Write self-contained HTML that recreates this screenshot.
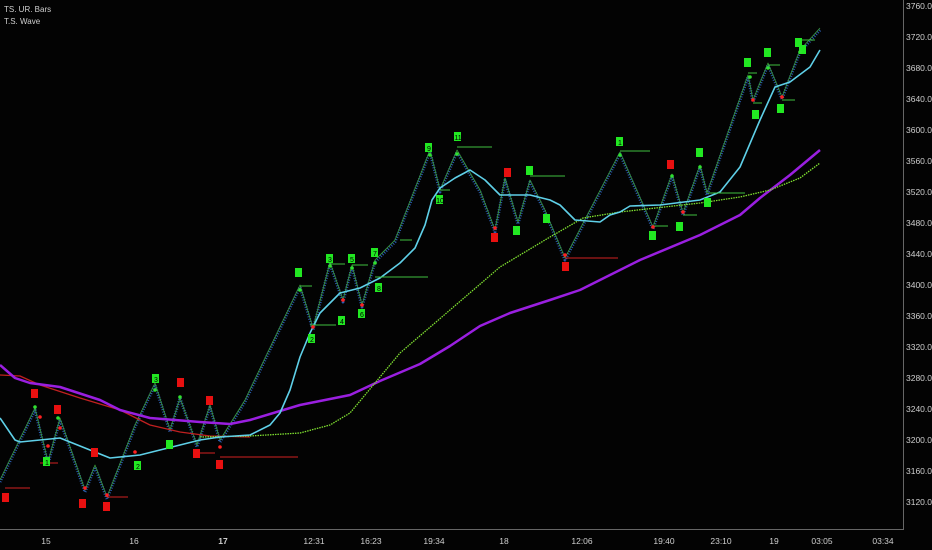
<!DOCTYPE html>
<html><head><meta charset="utf-8"><style>
html,body{margin:0;padding:0;background:#030303;overflow:hidden}
svg{display:block}
text{font-family:"Liberation Sans",sans-serif}
polyline{stroke-linejoin:round}
</style></head><body>
<svg width="932" height="550" viewBox="0 0 932 550" xmlns="http://www.w3.org/2000/svg">
<rect width="932" height="550" fill="#030303"/>
<text x="4" y="12" fill="#cfcfcf" font-size="8">TS. UR. Bars</text>
<text x="4" y="24" fill="#cfcfcf" font-size="8">T.S. Wave</text>
<line x1="903.5" y1="0" x2="903.5" y2="530" stroke="#666" stroke-width="1"/>
<line x1="0" y1="529.5" x2="904" y2="529.5" stroke="#666" stroke-width="1"/>
<g fill="#cfcfcf" font-size="8.5">
<text x="906" y="9">3760.0</text><text x="906" y="40">3720.0</text><text x="906" y="71">3680.0</text><text x="906" y="102">3640.0</text><text x="906" y="133">3600.0</text><text x="906" y="164">3560.0</text><text x="906" y="195">3520.0</text><text x="906" y="226">3480.0</text><text x="906" y="257">3440.0</text><text x="906" y="288">3400.0</text><text x="906" y="319">3360.0</text><text x="906" y="350">3320.0</text><text x="906" y="381">3280.0</text><text x="906" y="412">3240.0</text><text x="906" y="443">3200.0</text><text x="906" y="474">3160.0</text><text x="906" y="505">3120.0</text>
</g>
<g fill="#cfcfcf" font-size="8.5" text-anchor="middle">
<text x="46" y="544">15</text><text x="134" y="544">16</text><text x="223" y="544" font-weight="bold">17</text><text x="314" y="544">12:31</text><text x="371" y="544">16:23</text><text x="434" y="544">19:34</text><text x="504" y="544">18</text><text x="582" y="544">12:06</text><text x="664" y="544">19:40</text><text x="721" y="544">23:10</text><text x="774" y="544">19</text><text x="822" y="544">03:05</text><text x="883" y="544">03:34</text>
</g>
<polyline fill="none" stroke="#2a5cb0" stroke-width="3" stroke-dasharray="1 1.5" points="0,482 35,410 48,464 60,420 85,492 95,467 107,499 135,427 155,385 170,432 180,398 197,447 210,407 220,442 245,402 300,287 313,330 330,264 343,302 352,267 362,307 375,262 395,242 430,152 440,192 457,152 480,192 495,232 505,180 518,224 530,182 545,212 565,260 620,154 653,229 672,176 683,215 700,167 707,195 748,77 753,102 768,65 782,99 800,52 820,30"/>
<polyline fill="none" stroke="#3a9a3a" stroke-width="0.8" points="0,480 35,408 48,462 60,418 85,490 95,465 107,497 135,425 155,383 170,430 180,398 197,445 210,405 220,440 245,400 300,285 313,328 330,262 343,300 352,265 362,305 375,260 395,240 430,150 440,190 457,150 480,190 495,230 505,178 518,222 530,180 545,210 565,258 620,152 653,227 672,174 683,213 700,165 707,193 748,75 753,100 768,63 782,97 800,50 820,28"/>
<polyline fill="none" stroke="#c02020" stroke-width="1.3" points="0,375 20,376 40,385 80,398 120,410 150,425 180,432 210,436 250,437"/>
<polyline fill="none" stroke="#9a1fe0" stroke-width="2.5" points="0,365 15,378 30,383 60,387 100,400 120,410 150,418 175,420 200,422 230,424 250,420 300,405 350,395 380,381 420,364 450,346 480,326 510,313 550,300 580,290 610,275 640,260 700,235 740,215 760,198 790,175 820,150"/>
<polyline fill="none" stroke="#7fe030" stroke-width="1.3" stroke-dasharray="1.5 1" points="200,437 250,436 300,433 330,425 350,413 380,377 400,353 450,310 500,267 550,237 583,218 620,212 700,203 740,197 770,190 800,178 820,163"/>
<polyline fill="none" stroke="#5fd0e8" stroke-width="1.6" points="0,418 15,440 20,442 60,438 90,450 110,458 140,455 160,450 180,445 200,440 220,437 250,435 270,425 280,413 290,390 300,357 310,333 320,313 340,293 360,288 380,278 400,263 415,248 425,225 432,200 440,188 455,178 470,170 485,180 500,195 530,195 550,200 560,205 575,220 600,222 610,215 620,212 630,206 660,205 700,200 720,192 740,167 760,120 775,87 790,82 810,67 820,50"/>
<g stroke-width="1">
<path d="M5,488H30M107,497H128M220,457H298M565,258H618M40,463H58M195,453H215" stroke="#d02020"/>
<path d="M300,286H312M310,325H336M330,264H345M352,265H368M375,277H428M457,147H492M400,240H412M620,151H650M708,193H745M768,65H780M440,190H450M530,176H565M800,40H815M653,226H668M683,215H697M748,73H757M753,103H762M782,100H795" stroke="#3fbf3f"/>
</g>
<g font-size="7" text-anchor="middle" fill="#000">
<g fill="#e81010">
<rect x="31" y="389" width="7" height="9"/><rect x="54" y="405" width="7" height="9"/><rect x="91" y="448" width="7" height="9"/><rect x="79" y="499" width="7" height="9"/><rect x="103" y="502" width="7" height="9"/><rect x="2" y="493" width="7" height="9"/><rect x="177" y="378" width="7" height="9"/><rect x="206" y="396" width="7" height="9"/><rect x="193" y="449" width="7" height="9"/><rect x="216" y="460" width="7" height="9"/><rect x="504" y="168" width="7" height="9"/><rect x="491" y="233" width="7" height="9"/><rect x="562" y="262" width="7" height="9"/><rect x="667" y="160" width="7" height="9"/>
</g>
<g fill="#22e822">
<rect x="43" y="457" width="7" height="9"/><rect x="134" y="461" width="7" height="9"/><rect x="152" y="374" width="7" height="9"/><rect x="166" y="440" width="7" height="9"/><rect x="295" y="268" width="7" height="9"/><rect x="308" y="334" width="7" height="9"/><rect x="326" y="254" width="7" height="9"/><rect x="338" y="316" width="7" height="9"/><rect x="348" y="254" width="7" height="9"/><rect x="358" y="309" width="7" height="9"/><rect x="371" y="248" width="7" height="9"/><rect x="375" y="283" width="7" height="9"/><rect x="425" y="143" width="7" height="9"/><rect x="436" y="195" width="7" height="9"/><rect x="454" y="132" width="7" height="9"/><rect x="513" y="226" width="7" height="9"/><rect x="526" y="166" width="7" height="9"/><rect x="543" y="214" width="7" height="9"/><rect x="616" y="137" width="7" height="9"/><rect x="649" y="231" width="7" height="9"/><rect x="676" y="222" width="7" height="9"/><rect x="696" y="148" width="7" height="9"/><rect x="704" y="198" width="7" height="9"/><rect x="744" y="58" width="7" height="9"/><rect x="752" y="110" width="7" height="9"/><rect x="764" y="48" width="7" height="9"/><rect x="777" y="104" width="7" height="9"/><rect x="795" y="38" width="7" height="9"/><rect x="799" y="45" width="7" height="9"/>
</g>
<text x="305" y="276">1</text><text x="312" y="342">2</text><text x="330" y="262">3</text><text x="342" y="324">4</text><text x="352" y="262">5</text><text x="362" y="317">6</text><text x="375" y="256">7</text><text x="379" y="291">8</text><text x="429" y="151">9</text><text x="440" y="203">10</text><text x="458" y="140">11</text><text x="620" y="145">1</text><text x="47" y="465">1</text><text x="138" y="469">2</text><text x="156" y="382">3</text>
</g>
<g fill="#30e030"><circle cx="300" cy="290" r="1.8"/><circle cx="330" cy="266" r="1.8"/><circle cx="352" cy="268" r="1.8"/><circle cx="375" cy="263" r="1.8"/><circle cx="430" cy="155" r="1.8"/><circle cx="457" cy="154" r="1.8"/><circle cx="620" cy="155" r="1.8"/><circle cx="35" cy="407" r="1.8"/><circle cx="58" cy="418" r="1.8"/><circle cx="155" cy="390" r="1.8"/><circle cx="180" cy="397" r="1.8"/><circle cx="750" cy="77" r="1.8"/><circle cx="768" cy="68" r="1.8"/><circle cx="672" cy="176" r="1.8"/><circle cx="700" cy="167" r="1.8"/><circle cx="800" cy="52" r="1.8"/></g>
<g fill="#ff2020"><circle cx="313" cy="327" r="1.8"/><circle cx="343" cy="300" r="1.8"/><circle cx="362" cy="305" r="1.8"/><circle cx="48" cy="446" r="1.8"/><circle cx="85" cy="488" r="1.8"/><circle cx="107" cy="495" r="1.8"/><circle cx="135" cy="452" r="1.8"/><circle cx="220" cy="447" r="1.8"/><circle cx="495" cy="228" r="1.8"/><circle cx="565" cy="255" r="1.8"/><circle cx="40" cy="417" r="1.8"/><circle cx="60" cy="428" r="1.8"/><circle cx="653" cy="227" r="1.8"/><circle cx="683" cy="212" r="1.8"/><circle cx="753" cy="100" r="1.8"/><circle cx="782" cy="97" r="1.8"/></g>
</svg>
</body></html>
